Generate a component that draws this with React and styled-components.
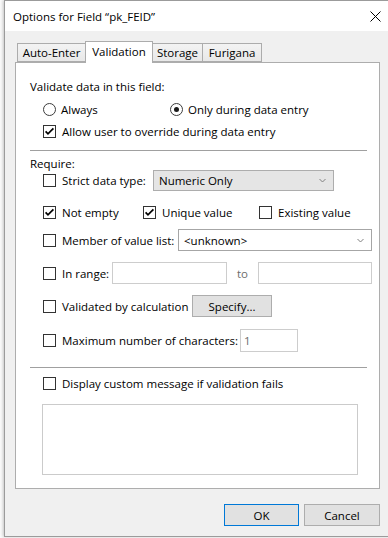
import React from 'react';
import styled, { createGlobalStyle } from 'styled-components';

const Global = createGlobalStyle`
  html, body { margin: 0; padding: 0; background: #fff; overflow: hidden; }
  body { font-family: "Open Sans", "Noto Sans", sans-serif; font-size: 11.5px; color: #000; }
  * { box-sizing: border-box; }
`;

const Desktop = styled.div`
  display: flex;
  width: 388px;
  height: 538px;
  overflow: hidden;
  background: #fff;
`;

const Behind = styled.div`
  flex: none;
  width: 4px;
  background: #fbfbfb;
`;

const Window = styled.div`
  flex: none;
  width: 387px;
  height: 537px;
  border: 1px solid #9b9b9b;
  background: #f0f0f0;
  display: flex;
  flex-direction: column;
  box-shadow: -1px 0 3px rgba(0, 0, 0, 0.22);
`;

const TitleBar = styled.div`
  flex: none;
  height: 30px;
  background: #fff;
  display: flex;
  align-items: center;
  justify-content: space-between;
  padding: 0 9px 0 8px;
`;

const Title = styled.div`
  font-size: 11.5px;
  white-space: nowrap;
`;

const Body = styled.div`
  flex: 1;
  display: flex;
  flex-direction: column;
  padding: 10px 10px 0 10px;
`;

const TabStrip = styled.div`
  display: flex;
  align-items: flex-end;
  height: 21px;
  padding-left: 2px;
  position: relative;
  z-index: 2;
`;

const Tab = styled.div`
  width: ${p => p.$w}px;
  height: ${p => (p.$active ? 22 : 19)}px;
  margin-left: ${p => (p.$first ? 0 : -1)}px;
  margin-bottom: ${p => (p.$active ? -1 : 0)}px;
  border: 1px solid #acacac;
  border-bottom: ${p => (p.$active ? 'none' : '1px solid #acacac')};
  background: ${p => (p.$active ? '#fff' : 'linear-gradient(#f3f3f3, #e8e8e8)')};
  display: flex;
  align-items: center;
  justify-content: center;
  padding-bottom: ${p => (p.$active ? 2 : 0)}px;
  white-space: nowrap;
  position: relative;
  z-index: ${p => (p.$active ? 3 : 1)};
`;

const Panel = styled.div`
  height: 427px;
  border: 1px solid #adadad;
  background: #fff;
  padding: 15px 7px 0 14px;
  display: flex;
  flex-direction: column;
  position: relative;
  z-index: 1;
`;

const Row = styled.div`
  flex: none;
  display: flex;
  align-items: center;
  height: ${p => p.$h}px;
  margin-top: ${p => p.$mt || 0}px;
  padding-left: ${p => (p.$indent ? 13 : 0)}px;
  white-space: nowrap;
`;

const Separator = styled.div`
  flex: none;
  height: 1px;
  margin-top: ${p => p.$mt}px;
  margin-right: 5px;
  background: #a0a0a0;
`;

const Option = styled.div`
  display: flex;
  align-items: center;
  flex: none;
  width: ${p => (p.$w ? `${p.$w}px` : 'auto')};
`;

const Box = styled.span`
  flex: none;
  width: 13px;
  height: 13px;
  border: 1px solid #333;
  background: #fff;
  display: flex;
  align-items: center;
  justify-content: center;
`;

const RadioCircle = styled.span`
  flex: none;
  width: 13px;
  height: 13px;
  border: 1px solid #3c3c3c;
  border-radius: 50%;
  background: #fff;
  display: flex;
  align-items: center;
  justify-content: center;
`;

const RadioDot = styled.span`
  width: 5px;
  height: 5px;
  border-radius: 50%;
  background: #1a1a1a;
`;

const OptionText = styled.span`
  margin-left: ${p => p.$gap}px;
  width: ${p => (p.$w ? `${p.$w - p.$gap - 13}px` : 'auto')};
  flex: none;
  white-space: nowrap;
`;

const Select = styled.div`
  flex: none;
  width: ${p => p.$w}px;
  height: ${p => p.$h}px;
  border: 1px solid ${p => (p.$flat ? '#a6a6a6' : '#adadad')};
  background: ${p => (p.$flat ? '#fff' : '#e5e5e5')};
  display: flex;
  align-items: center;
  padding: 0 7px 0 5px;
`;

const SelectText = styled.span`
  flex: 1;
`;

const Field = styled.div`
  flex: none;
  width: ${p => p.$w}px;
  height: ${p => p.$h}px;
  border: 1px solid #cdcdcd;
  background: #fff;
  color: #6d6d6d;
  display: flex;
  align-items: center;
  padding-left: 3px;
`;

const ToText = styled.span`
  flex: none;
  width: 31px;
  text-align: center;
  color: #6d6d6d;
`;

const Button = styled.div`
  flex: none;
  width: ${p => p.$w}px;
  height: 22px;
  border: 1px solid ${p => (p.$default ? '#0078d7' : '#adadad')};
  background: #e1e1e1;
  display: flex;
  align-items: center;
  justify-content: center;
`;

const MessageBox = styled.div`
  flex: none;
  width: 316px;
  height: 71px;
  margin-top: 11px;
  margin-left: 12px;
  border: 1px solid #cbcbcb;
  background: #fff;
`;

const ButtonRow = styled.div`
  display: flex;
  justify-content: flex-end;
  gap: 5px;
  margin-top: 15px;
`;

const CheckMark = () => (
  <svg width="11" height="11" viewBox="0 0 11 11">
    <path d="M1.6 5.4 L4 7.9 L9.4 2.4" fill="none" stroke="#000" strokeWidth="1.7" />
  </svg>
);

const Chevron = () => (
  <svg width="7" height="5" viewBox="0 0 7 5">
    <path d="M0.5 1 L3.5 4 L6.5 1" fill="none" stroke="#808080" strokeWidth="1" />
  </svg>
);

const CloseIcon = () => (
  <svg width="11" height="11" viewBox="0 0 11 11">
    <path d="M0.5 0.5 L10.5 10.5 M10.5 0.5 L0.5 10.5" stroke="#000" strokeWidth="1" />
  </svg>
);

const Check = ({ checked, label, w }) => (
  <Option>
    <Box>{checked && <CheckMark />}</Box>
    <OptionText $gap={6} $w={w}>{label}</OptionText>
  </Option>
);

const Radio = ({ selected, label, w }) => (
  <Option $w={w}>
    <RadioCircle>{selected && <RadioDot />}</RadioCircle>
    <OptionText $gap={5}>{label}</OptionText>
  </Option>
);

export default function App() {
  return (
    <>
      <Global />
      <Desktop>
        <Behind />
        <Window>
          <TitleBar>
            <Title>Options for Field “pk_FEID”</Title>
            <CloseIcon />
          </TitleBar>
          <Body>
            <TabStrip>
              <Tab $w={69} $first>Auto-Enter</Tab>
              <Tab $w={68} $active>Validation</Tab>
              <Tab $w={51}>Storage</Tab>
              <Tab $w={60}>Furigana</Tab>
            </TabStrip>
            <Panel>
              <Row $h={16}>Validate data in this field:</Row>
              <Row $h={20} $mt={5} $indent>
                <Radio label="Always" w={127} />
                <Radio label="Only during data entry" selected />
              </Row>
              <Row $h={20} $mt={2} $indent>
                <Check checked label="Allow user to override during data entry" />
              </Row>
              <Separator $mt={9} />
              <Row $h={14} $mt={5}>Require:</Row>
              <Row $h={21} $indent>
                <Check label="Strict data type:" w={110} />
                <Select $w={181} $h={21}>
                  <SelectText>Numeric Only</SelectText>
                  <Chevron />
                </Select>
              </Row>
              <Row $h={20} $mt={11} $indent>
                <Check checked label="Not empty" w={100} />
                <Check checked label="Unique value" w={116} />
                <Check label="Existing value" />
              </Row>
              <Row $h={22} $mt={7} $indent>
                <Check label="Member of value list:" w={135} />
                <Select $w={194} $h={22} $flat>
                  <SelectText>&lt;unknown&gt;</SelectText>
                  <Chevron />
                </Select>
              </Row>
              <Row $h={22} $mt={11} $indent>
                <Check label="In range:" w={69} />
                <Field $w={115} $h={22} />
                <ToText>to</ToText>
                <Field $w={114} $h={22} />
              </Row>
              <Row $h={22} $mt={11} $indent>
                <Check label="Validated by calculation" w={149} />
                <Button $w={80}>Specify...</Button>
              </Row>
              <Row $h={23} $mt={12} $indent>
                <Check label="Maximum number of characters:" w={197} />
                <Field $w={58} $h={23}>1</Field>
              </Row>
              <Separator $mt={15} />
              <Row $h={20} $mt={5} $indent>
                <Check label="Display custom message if validation fails" />
              </Row>
              <MessageBox />
            </Panel>
            <ButtonRow>
              <Button $w={75} $default>OK</Button>
              <Button $w={76}>Cancel</Button>
            </ButtonRow>
          </Body>
        </Window>
      </Desktop>
    </>
  );
}
